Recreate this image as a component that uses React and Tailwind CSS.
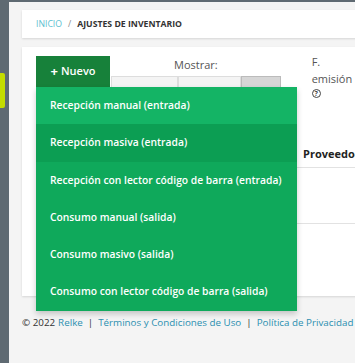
import React from "react";

const items = [
  "Recepción manual (entrada)",
  "Recepción masiva (entrada)",
  "Recepción con lector código de barra (entrada)",
  "Consumo manual (salida)",
  "Consumo masivo (salida)",
  "Consumo con lector código de barra (salida)",
];

export default function App() {
  return (
    <div
      className="w-[355px] h-[363px] overflow-hidden flex bg-[#5f6a72]"
      style={{ fontFamily: '"Open Sans", "Liberation Sans", sans-serif' }}
    >
      <div className="w-[9px] shrink-0 flex flex-col pt-[73px]">
        <div className="w-[5px] h-[35px] bg-[#c4dc00] rounded-r-[2px]" />
      </div>
      <div className="flex-1 mt-[2px] bg-[#f4f4f4] pl-[13px] pt-[8px] flex flex-col min-w-0">
        <div className="h-[28px] bg-white shadow-[0_1px_2px_rgba(0,0,0,0.12)] flex items-center pl-[14px] pt-[1px] text-[8.7px] whitespace-nowrap -mr-[20px]">
          <span className="text-[#5bc0cf]">INICIO</span>
          <span className="text-[#888] mx-[6px]">/</span>
          <span className="font-bold text-[#333]">AJUSTES DE INVENTARIO</span>
        </div>
        <div className="relative mt-[9px] h-[249px] bg-white shadow-[0_1px_2px_rgba(0,0,0,0.12)] -mr-[20px] pt-[9px] pl-[14px]">
          <div className="flex items-start">
            <button className="w-[74px] h-[31px] bg-[#17813a] text-white text-[11px] font-semibold flex items-center justify-center gap-[3px]">
              <span className="text-[13px] font-bold leading-none">+</span>Nuevo
            </button>
            <div className="ml-[63px] flex flex-col">
              <span className="text-[11px] text-[#555] leading-[14px] mt-[2px] ml-[1px]">Mostrar:</span>
              <div className="flex text-[11px] text-[#666] mt-[4px] -ml-[62px] h-[22px]">
                <span className="px-[6px] pt-[6px] border border-[#ddd] bg-[#f4f4f4]">Recepción</span>
                <span className="px-[6px] pt-[6px] border border-[#ddd] bg-[#f4f4f4]">Consumo</span>
                <span className="px-[6px] pt-[6px] border border-[#bbb] bg-[#d6d6d6]">Todo</span>
              </div>
            </div>
            <div className="ml-[31px] flex flex-col text-[11px] text-[#555] leading-[17px] -mt-[3px] whitespace-nowrap">
              <span>F.</span>
              <span>emisión</span>
              <span className="w-[9px] h-[9px] rounded-full border border-[#444] text-[7px] leading-[7px] flex items-center justify-center mt-[2px] font-bold text-[#444]">?</span>
            </div>
          </div>
          <div className="mt-[44px] border-b border-[#e2e2e2] h-[26px] flex items-end pb-[5px] text-[11px] font-bold text-[#222]">
            <span className="ml-[267px]">Proveedor</span>
          </div>
          <div className="h-[56px] border-b border-[#e2e2e2]" />

          <div className="absolute left-[14px] top-[40px] w-[261px] bg-[#0fa95b] shadow-[0_3px_6px_rgba(0,0,0,0.2)] flex flex-col">
            {items.map((t, i) => (
              <div
                key={t}
                className={
                  "h-[37.3px] flex items-center pl-[14px] text-[10.3px] font-semibold text-white whitespace-nowrap " +
                  (i === 0 ? "bg-[#14b465]" : i === 1 ? "bg-[#0c9e53]" : "bg-[#0fa95b]")
                }
              >
                {t}
              </div>
            ))}
          </div>
        </div>
        <div className="mt-[20px] text-[9.8px] text-[#333] whitespace-nowrap flex items-center">
          <span>© 2022 </span>
          <span className="text-[#2a8fb0] ml-[3px]">Relke</span>
          <span className="mx-[5px] text-[#333]">|</span>
          <span className="text-[#2a8fb0]">Términos y Condiciones de Uso</span>
          <span className="mx-[5px] text-[#333]">|</span>
          <span className="text-[#2a8fb0]">Política de Privacidad</span>
        </div>
      </div>
    </div>
  );
}
